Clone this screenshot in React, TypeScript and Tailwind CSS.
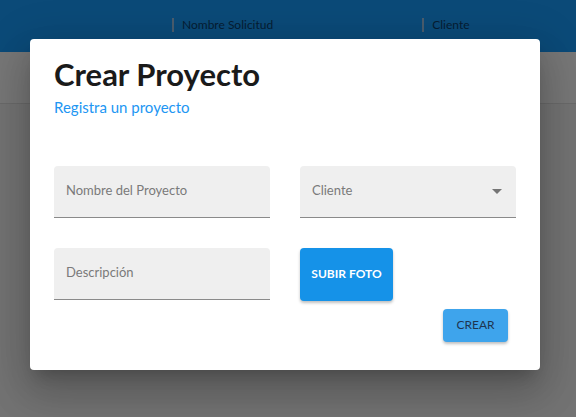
const font = { fontFamily: 'Lato, "Noto Sans", sans-serif' }

function Field({ label, select }: { label: string; select?: boolean }) {
  return (
    <div className="flex h-[52px] items-center justify-between rounded-t-[4px] border-b border-[#8a8a8a] bg-[#efefef] pl-3 pr-[14px]">
      <span className="text-[13px] text-[#7a7a7a]">{label}</span>
      {select && (
        <svg width="10" height="5" viewBox="0 0 10 5" className="mt-[1px]">
          <path d="M0 0h10L5 5z" fill="#757575" />
        </svg>
      )}
    </div>
  )
}

export default function App() {
  return (
    <div className="relative h-[417px] w-[576px] overflow-hidden bg-[#737373]" style={font}>
      <div className="flex h-[52px] items-start bg-[#0b4a78] pt-[16px] text-[12px] text-[#061d33]">
        <div className="ml-[172px] flex items-center gap-[8px]">
          <span className="h-[14px] w-[2px] bg-[#4a5d6e]" />
          <span>Nombre Solicitud</span>
        </div>
        <div className="ml-[149px] flex items-center gap-[8px]">
          <span className="h-[14px] w-[2px] bg-[#4a5d6e]" />
          <span>Cliente</span>
        </div>
      </div>
      <div className="h-[52px] border-b border-[#6a6a6a] bg-[#777777]" />

      <div className="absolute left-[30px] top-[39px] h-[331px] w-[510px] rounded-[4px] bg-white px-6 pt-[16px] shadow-[0_11px_15px_-7px_rgba(0,0,0,0.2),0_24px_38px_3px_rgba(0,0,0,0.14),0_9px_46px_8px_rgba(0,0,0,0.12)]">
        <h1 className="text-[31px] font-bold leading-[38px] text-[#1a1a1a]">Crear Proyecto</h1>
        <p className="mt-[3px] text-[15px] text-[#2196f3]">Registra un proyecto</p>

        <div className="mt-[47px] grid grid-cols-2 gap-x-[30px] gap-y-[30px]">
          <Field label="Nombre del Proyecto" />
          <Field label="Cliente" select />
          <Field label="Descripción" />
          <div>
            <button className="h-[53px] w-[93px] rounded-[4px] bg-[#1592e8] text-[12px] font-bold text-white shadow-[0_2px_3px_rgba(0,0,0,0.25)]">
              SUBIR FOTO
            </button>
          </div>
        </div>

        <div className="mt-[8px] flex justify-end pr-[8px]">
          <button className="h-[33px] w-[65px] rounded-[4px] bg-[#3ea4ec] text-[12px] text-[#1e3550] shadow-[0_2px_3px_rgba(0,0,0,0.25)]">
            CREAR
          </button>
        </div>
      </div>
    </div>
  )
}
